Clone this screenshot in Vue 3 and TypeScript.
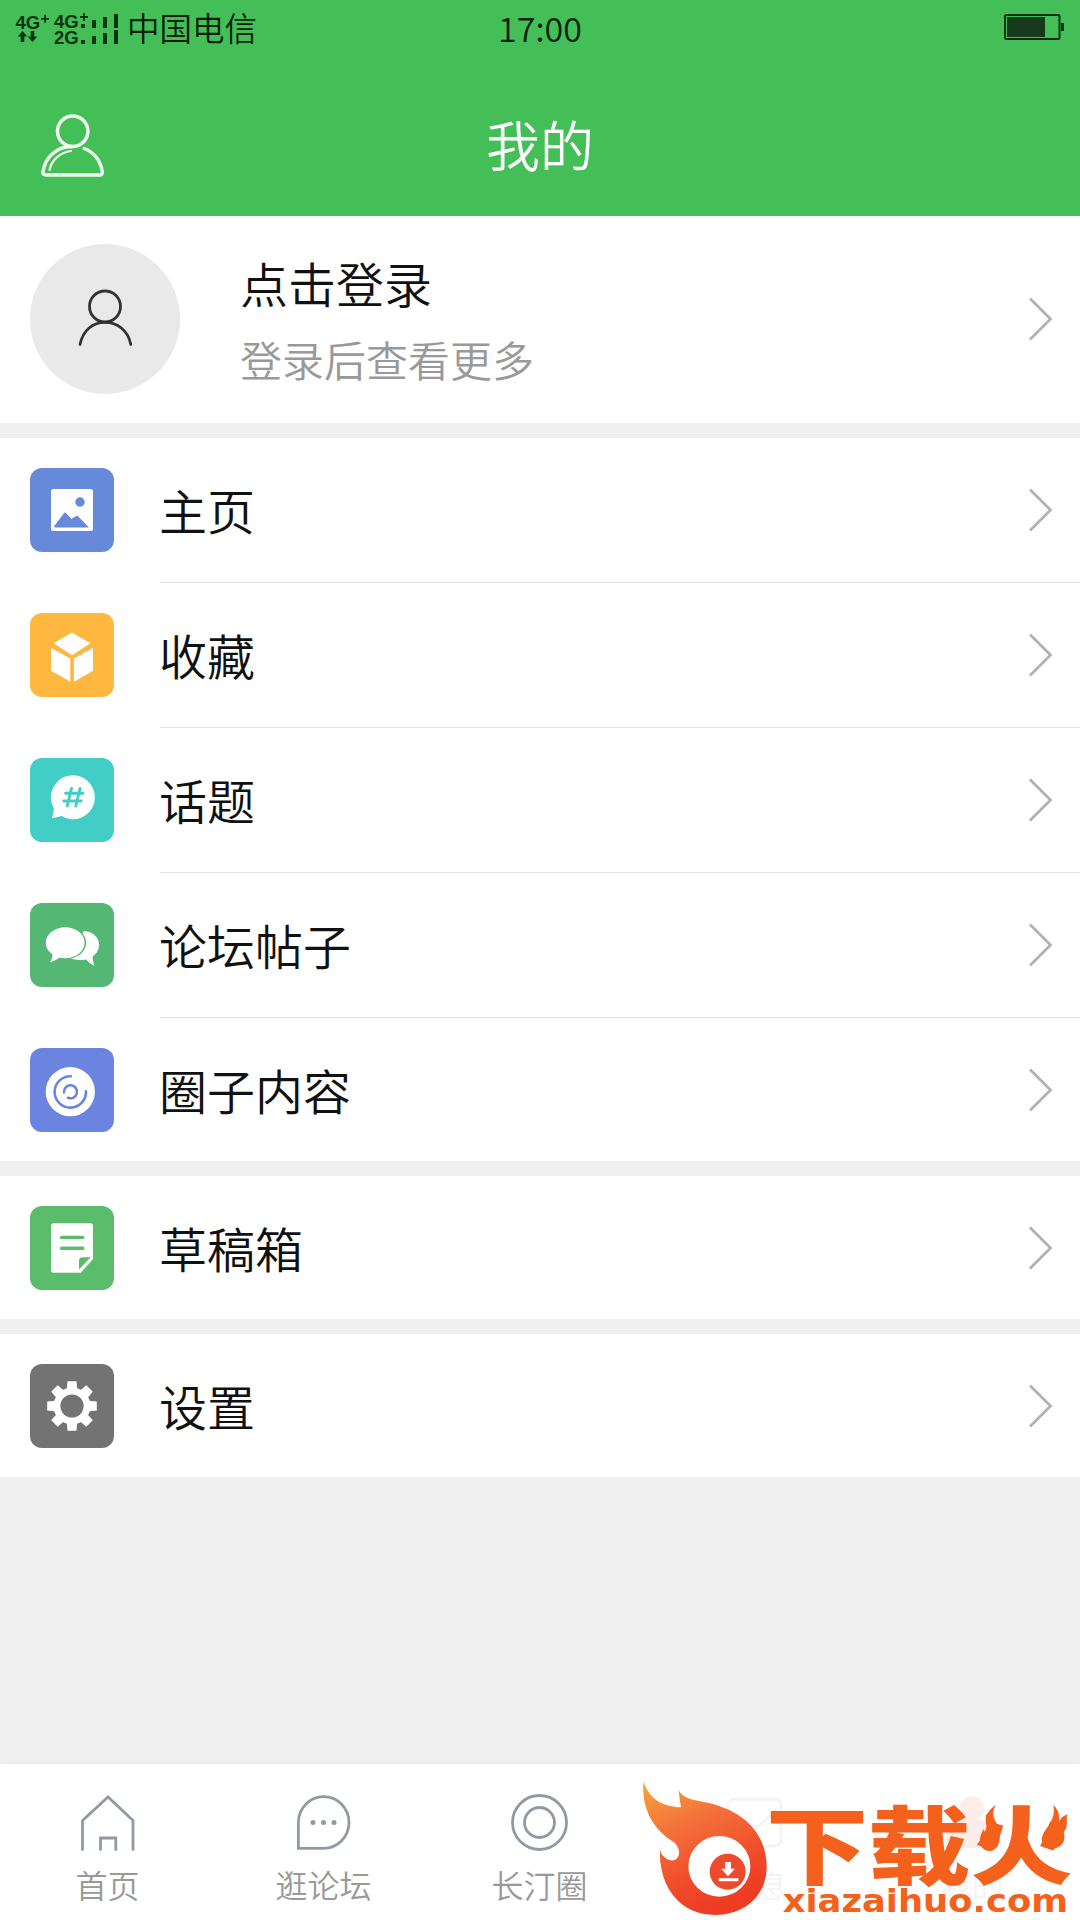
<template>
  <div class="page">
    <header class="header">
      <div class="status-bar">
        <div class="status-left">
          <svg class="signal" width="108" height="36" viewBox="14 9 108 36" fill="#06340f">
            <text x="15.500" y="27" class="net">4G</text>
            <path d="M41 16.800h8M45 12.800v8" stroke="#06340f" stroke-width="1.800" />
            <path d="M22.500 29l4.800 5.500h-3v5.500h-3.600v-5.500h-3z M32.500 40l4.800-5.500h-3V29h-3.600v5.500h-3z" />
            <text x="54" y="26" class="net">4G</text>
            <text x="54" y="42" class="net">2G</text>
            <path d="M80 15h8M84 11v8" stroke="#06340f" stroke-width="1.800" />
            <path d="M81 22h4v4h-4z M92 18h4v8h-4z M103 15h4v11h-4z M114 12h4v14h-4z" />
            <path d="M81 38h4v4h-4z M92 34h4v8h-4z M103 31h4v11h-4z M114 28h4v14h-4z" />
          </svg>
          <span class="carrier">中国电信</span>
        </div>
        <span class="clock">17:00</span>
        <div class="status-right">
          <svg width="62" height="28" viewBox="0 0 62 28">
            <rect x="1" y="2" width="54.500" height="24" rx="1.500" fill="none" stroke="#0b3014" stroke-width="2" />
            <rect x="3" y="4" width="38" height="20" fill="#17381b" />
            <rect x="57" y="10" width="3" height="8" fill="#0b3014" />
          </svg>
        </div>
      </div>
      <div class="nav-bar">
        <svg class="nav-user" width="68" height="66" viewBox="39 112 68 66" fill="none" stroke="#effdf0" stroke-linecap="round">
          <circle cx="72.700" cy="130.200" r="15.200" stroke-width="3.500" />
          <path d="M72 145.500C55 145.500 45 158 43 170.500Q42.500 174 46 174H99.500Q102.700 174 102.300 170.500C100.500 160 94 151.500 84.300 147.500" stroke-width="3.500" />
          <path d="M71 150C60 151.500 51.500 159 49.500 169" stroke-width="2.200" />
        </svg>
        <h1>我的</h1>
      </div>
    </header>

    <section class="profile">
      <div class="avatar">
        <svg width="60" height="64" viewBox="75 285 60 64" fill="none" stroke="#323232" stroke-width="2.800" stroke-linecap="round">
          <circle cx="105" cy="304.500" r="15.500" />
          <path d="M80 342.500C83 328 93 320.300 105 320.300S128 328 130.800 342.500" />
        </svg>
      </div>
      <div class="profile-text">
        <div class="login">点击登录</div>
        <div class="hint">登录后查看更多</div>
      </div>
      <svg class="chevron" width="26" height="46" viewBox="0 0 26 46"><path d="M2 2.500L22.500 23L2 43.500" /></svg>
    </section>

    <section v-for="(group, i) in groups" :key="i" class="group">
      <div v-for="item in group" :key="item.icon" class="row">
        <svg class="tile" :class="item.icon" width="84" height="84" viewBox="0 0 84 84">
          <template v-if="item.icon === 'picture'">
            <rect x="21" y="21" width="42" height="42" rx="2.500" class="w" />
            <circle cx="50" cy="34" r="4.700" class="c" />
            <path d="M24.300 58L34 45.200Q35 44 36.200 45.200L41.500 51L45.700 48.200Q47 47.400 48.200 48.500L59 59.500H25Q24 59.500 24.300 58z" class="c" />
          </template>
          <template v-else-if="item.icon === 'box'">
            <path d="M41.900 19.500L60.500 30.300L42.200 42.300L23.500 30.300z" class="w" />
            <path d="M21 34.700L40.300 45.500V68.700L21 57.700z M63 34.700L43.900 45.500V68.700L63 57.700z" class="w" />
          </template>
          <template v-else-if="item.icon === 'topic'">
            <path d="M43 17.300a22 22 0 1 1-11.500 40.800Q26.500 59.300 21.800 60.300Q23.800 55.500 23.900 50.300A22 22 0 0 1 43 17.300z" class="w" />
            <path d="M35.600 35.200H53 M33.700 43H51.200 M41.500 30.500L37.300 48 M50 30.500L45.800 48" class="line" stroke-width="2.900" />
          </template>
          <template v-else-if="item.icon === 'forum'">
            <path d="M54 28a15 14 0 0 1 8.600 25.600Q62.300 57 64.300 62.700Q59 60.300 56 56.500C48 58 42 56 38.500 54.500z" class="w" />
            <ellipse cx="36" cy="39.900" rx="20.200" ry="16.200" class="c" />
            <ellipse cx="35.200" cy="39.700" rx="19.400" ry="15.500" class="w" />
            <path d="M22.500 50Q23 54.500 20 59.500Q26 57.500 30.500 54z" class="w" />
          </template>
          <template v-else-if="item.icon === 'circle'">
            <circle cx="40.300" cy="43.700" r="24.600" class="w" />
            <path d="M40.800 28.200A15.700 15.700 0 1 0 56 43.200" class="line" stroke-width="2.600" />
            <path d="M34 44.500A6.500 6.500 0 1 1 38 49.800" class="line" stroke-width="2.600" />
          </template>
          <template v-else-if="item.icon === 'draft'">
            <path d="M23.500 17.300H60.500Q63 17.300 63 19.800V53L50.800 66.700H23.500Q21 66.700 21 64.200V19.800Q21 17.300 23.500 17.300z" class="w" />
            <path d="M31.500 31.400H52.800 M31.500 42.200H52.800" class="line" stroke-width="3.400" />
            <path d="M49 63.500V55Q49 51.300 52.700 51.300H60.700z" class="c" />
          </template>
          <template v-else>
            <circle cx="42" cy="42" r="18.500" class="w" />
            <path v-for="n in 8" :key="n" d="M36.600 28L37.500 17.200H46.500L47.400 28z" :transform="`rotate(${n * 45} 42 42)`" class="w" />
            <circle cx="42" cy="42" r="11.600" class="c" />
          </template>
        </svg>
        <div class="row-body">
          <span>{{ item.label }}</span>
          <svg class="chevron" width="26" height="46" viewBox="0 0 26 46"><path d="M2 2.500L22.500 23L2 43.500" /></svg>
        </div>
      </div>
    </section>

    <nav class="tab-bar">
      <div v-for="tab in tabs" :key="tab.icon" class="tab" :class="{ faded: tab.faded }">
        <svg width="64" height="64" viewBox="0 0 64 64" fill="none" stroke="#919aa2" stroke-width="2.800" stroke-linecap="round">
          <path v-if="tab.icon === 'home'" d="M6.500 58.500V29.500L32 6L57 29.500V58.500 M24.500 58.500V47H39.800V58.500" />
          <template v-else-if="tab.icon === 'chat'">
            <path d="M6.400 57.300V31.500A25.300 25.800 0 1 1 31.700 57.300z" />
            <path d="M21 31.500h.01M31.500 31.500h.01M42 31.500h.01" stroke-width="5" />
          </template>
          <template v-else-if="tab.icon === 'ring'">
            <circle cx="31.500" cy="31.500" r="27" />
            <circle cx="31.500" cy="31.500" r="15" />
          </template>
          <template v-else-if="tab.icon === 'message'">
            <rect x="4" y="8" width="53" height="47" rx="6" />
            <path d="M19 27L32 37L47 24" />
          </template>
          <path v-else d="M32 5a12 12 0 0 1 5 23C50 30 57 38 58 57H5C6 38 14 30 27 28A12 12 0 0 1 32 5z" fill="#f35b3c" stroke="none" />
        </svg>
        <span>{{ tab.label }}</span>
      </div>
    </nav>

    <svg class="brand" width="460" height="156" viewBox="0 42 1380 468">
      <defs>
        <linearGradient id="flame" x1="0.100" y1="0" x2="0.500" y2="1">
          <stop offset="0" stop-color="#f6a03c" />
          <stop offset="0.350" stop-color="#f4713a" />
          <stop offset="0.750" stop-color="#f04a2a" />
          <stop offset="1" stop-color="#ee3b23" />
        </linearGradient>
      </defs>
      <path fill="url(#flame)" d="M70 95C90 150 130 170 183 172Q178 145 176 120C190 150 230 150 270 160C370 185 440 250 440 350C440 440 370 495 285 495C180 495 115 410 120 298C125 325 150 335 165 330C185 320 180 285 155 272C100 235 65 180 70 95z" />
      <ellipse cx="298" cy="349" rx="93" ry="91" fill="#fff" />
      <circle cx="323" cy="365" r="54" fill="#ee4a2c" />
      <path d="M315 336H333V356H345L324 379L303 356H315z M296 385H355V394H296z" fill="#fff" />
      <g fill="#f4611c">
        <text class="brand-name" transform="translate(437 383) scale(1.200 1)">下载火</text>
        <path d="M1128 165C1112 190 1122 205 1132 224C1148 262 1138 302 1108 303C1077 300 1072 262 1092 236Q1093 250 1101 254C1104 235 1094 220 1098 195C1106 190 1104 180 1128 165z" />
        <path d="M1300 165C1322 185 1316 205 1318 215C1322 205 1328 198 1343 193C1336 210 1346 220 1336 236L1325 240Q1337 250 1332 270C1326 300 1280 304 1266 276C1258 240 1312 222 1300 165z" />
        <text class="brand-url" x="488" y="486" textLength="856" lengthAdjust="spacingAndGlyphs">xiazaihuo.com</text>
      </g>
    </svg>
  </div>
</template>

<script setup lang="ts">
type MenuItem = { icon: string; label: string }
type Tab = { icon: string; label: string; faded?: boolean }

const groups: MenuItem[][] = [
  [
    { icon: 'picture', label: '主页' },
    { icon: 'box', label: '收藏' },
    { icon: 'topic', label: '话题' },
    { icon: 'forum', label: '论坛帖子' },
    { icon: 'circle', label: '圈子内容' },
  ],
  [{ icon: 'draft', label: '草稿箱' }],
  [{ icon: 'settings', label: '设置' }],
]

const tabs: Tab[] = [
  { icon: 'home', label: '首页' },
  { icon: 'chat', label: '逛论坛' },
  { icon: 'ring', label: '长汀圈' },
  { icon: 'message', label: '消息', faded: true },
  { icon: 'mine', label: '我的', faded: true },
]
</script>

<style>
body {
  background: #f0f0f0;
}
</style>

<style scoped>
.page {
  position: relative;
  display: flex;
  flex-direction: column;
  width: 1080px;
  height: 1920px;
  overflow: hidden;
  background: #f0f0f0;
  color: #111;
  font-family: "Noto Sans CJK SC", sans-serif;
  font-weight: 350;
}
svg {
  display: block;
  flex: none;
}
.header {
  height: 216px;
  background: #44bf57;
}
.status-bar {
  display: grid;
  grid-template-columns: 1fr auto 1fr;
  align-items: center;
  height: 54px;
  padding: 0 14px;
  box-sizing: border-box;
  color: #041f08;
}
.status-left {
  display: flex;
  align-items: center;
  gap: 5px;
}
.net {
  font: bold 18.500px "Liberation Sans", sans-serif;
}
.carrier {
  font-size: 32.500px;
  line-height: 54px;
  padding-bottom: 3px;
}
.clock {
  font-size: 34px;
  line-height: 50px;
  padding-bottom: 2px;
}
.status-right {
  display: flex;
  justify-content: flex-end;
  padding-bottom: 3px;
}
.nav-bar {
  display: grid;
  grid-template-columns: 1fr auto 1fr;
  align-items: center;
  height: 162px;
  padding: 0 39px;
  color: #fff;
}
.nav-user {
  margin-top: 21px;
}
.nav-bar h1 {
  margin: 17px 0 0;
  font-size: 54px;
  font-weight: 350;
  line-height: 80px;
}
.profile {
  display: flex;
  align-items: center;
  height: 207px;
  padding: 0 26px 2px 30px;
  margin-bottom: 15px;
  box-sizing: border-box;
  background: #fff;
}
.avatar {
  display: flex;
  align-items: center;
  justify-content: center;
  width: 150px;
  height: 150px;
  border-radius: 50%;
  background: #e9e9ea;
}
.profile-text {
  flex: 1;
  margin-left: 60px;
  padding-top: 5px;
}
.login {
  font-size: 48px;
  line-height: 76px;
}
.hint {
  font-size: 42px;
  line-height: 78px;
  color: #999;
}
.chevron {
  fill: none;
  stroke: #b2b2b2;
  stroke-width: 2.800;
}
.group {
  background: #fff;
  margin-bottom: 15px;
}
.row {
  display: flex;
  height: 145px;
  padding-left: 30px;
}
.row:last-child {
  height: 143px;
}
.tile {
  margin-top: 30px;
  border-radius: 12px;
  background: var(--tile);
}
.picture { --tile: #668ad9; }
.box { --tile: #feb73f; }
.topic { --tile: #42cdc7; }
.forum { --tile: #54b774; }
.circle { --tile: #6b84df; }
.draft { --tile: #5bbd6c; }
.settings { --tile: #737373; }
.w { fill: #fff; }
.c { fill: var(--tile); }
.line {
  fill: none;
  stroke: var(--tile);
  stroke-linecap: round;
}
.row-body {
  display: flex;
  flex: 1;
  align-items: center;
  justify-content: space-between;
  height: 100%;
  box-sizing: border-box;
  margin-left: 46px;
  padding-right: 26px;
  border-bottom: 1px solid #e2e2e2;
  font-size: 48px;
}
.row-body span {
  margin-left: -1px;
  padding-bottom: 2px;
}
.row:last-child .row-body {
  border-bottom: none;
}
.tab-bar {
  display: flex;
  height: 156px;
  margin-top: auto;
  background: #fff;
  box-shadow: 0 -1px 3px rgba(0, 0, 0, 0.04);
}
.tab {
  display: flex;
  flex: 1;
  flex-direction: column;
  align-items: center;
  padding-top: 27px;
  font-size: 32px;
  line-height: 46px;
  color: #999;
}
.tab span {
  margin: 6px 1px 0 0;
}
.tab.faded {
  opacity: 0.1;
}
.brand {
  position: absolute;
  right: 0;
  bottom: 0;
}
.brand-name {
  font-size: 256px;
  font-weight: 900;
}
.brand-url {
  font: bold 96px "DejaVu Sans", sans-serif;
}
</style>
